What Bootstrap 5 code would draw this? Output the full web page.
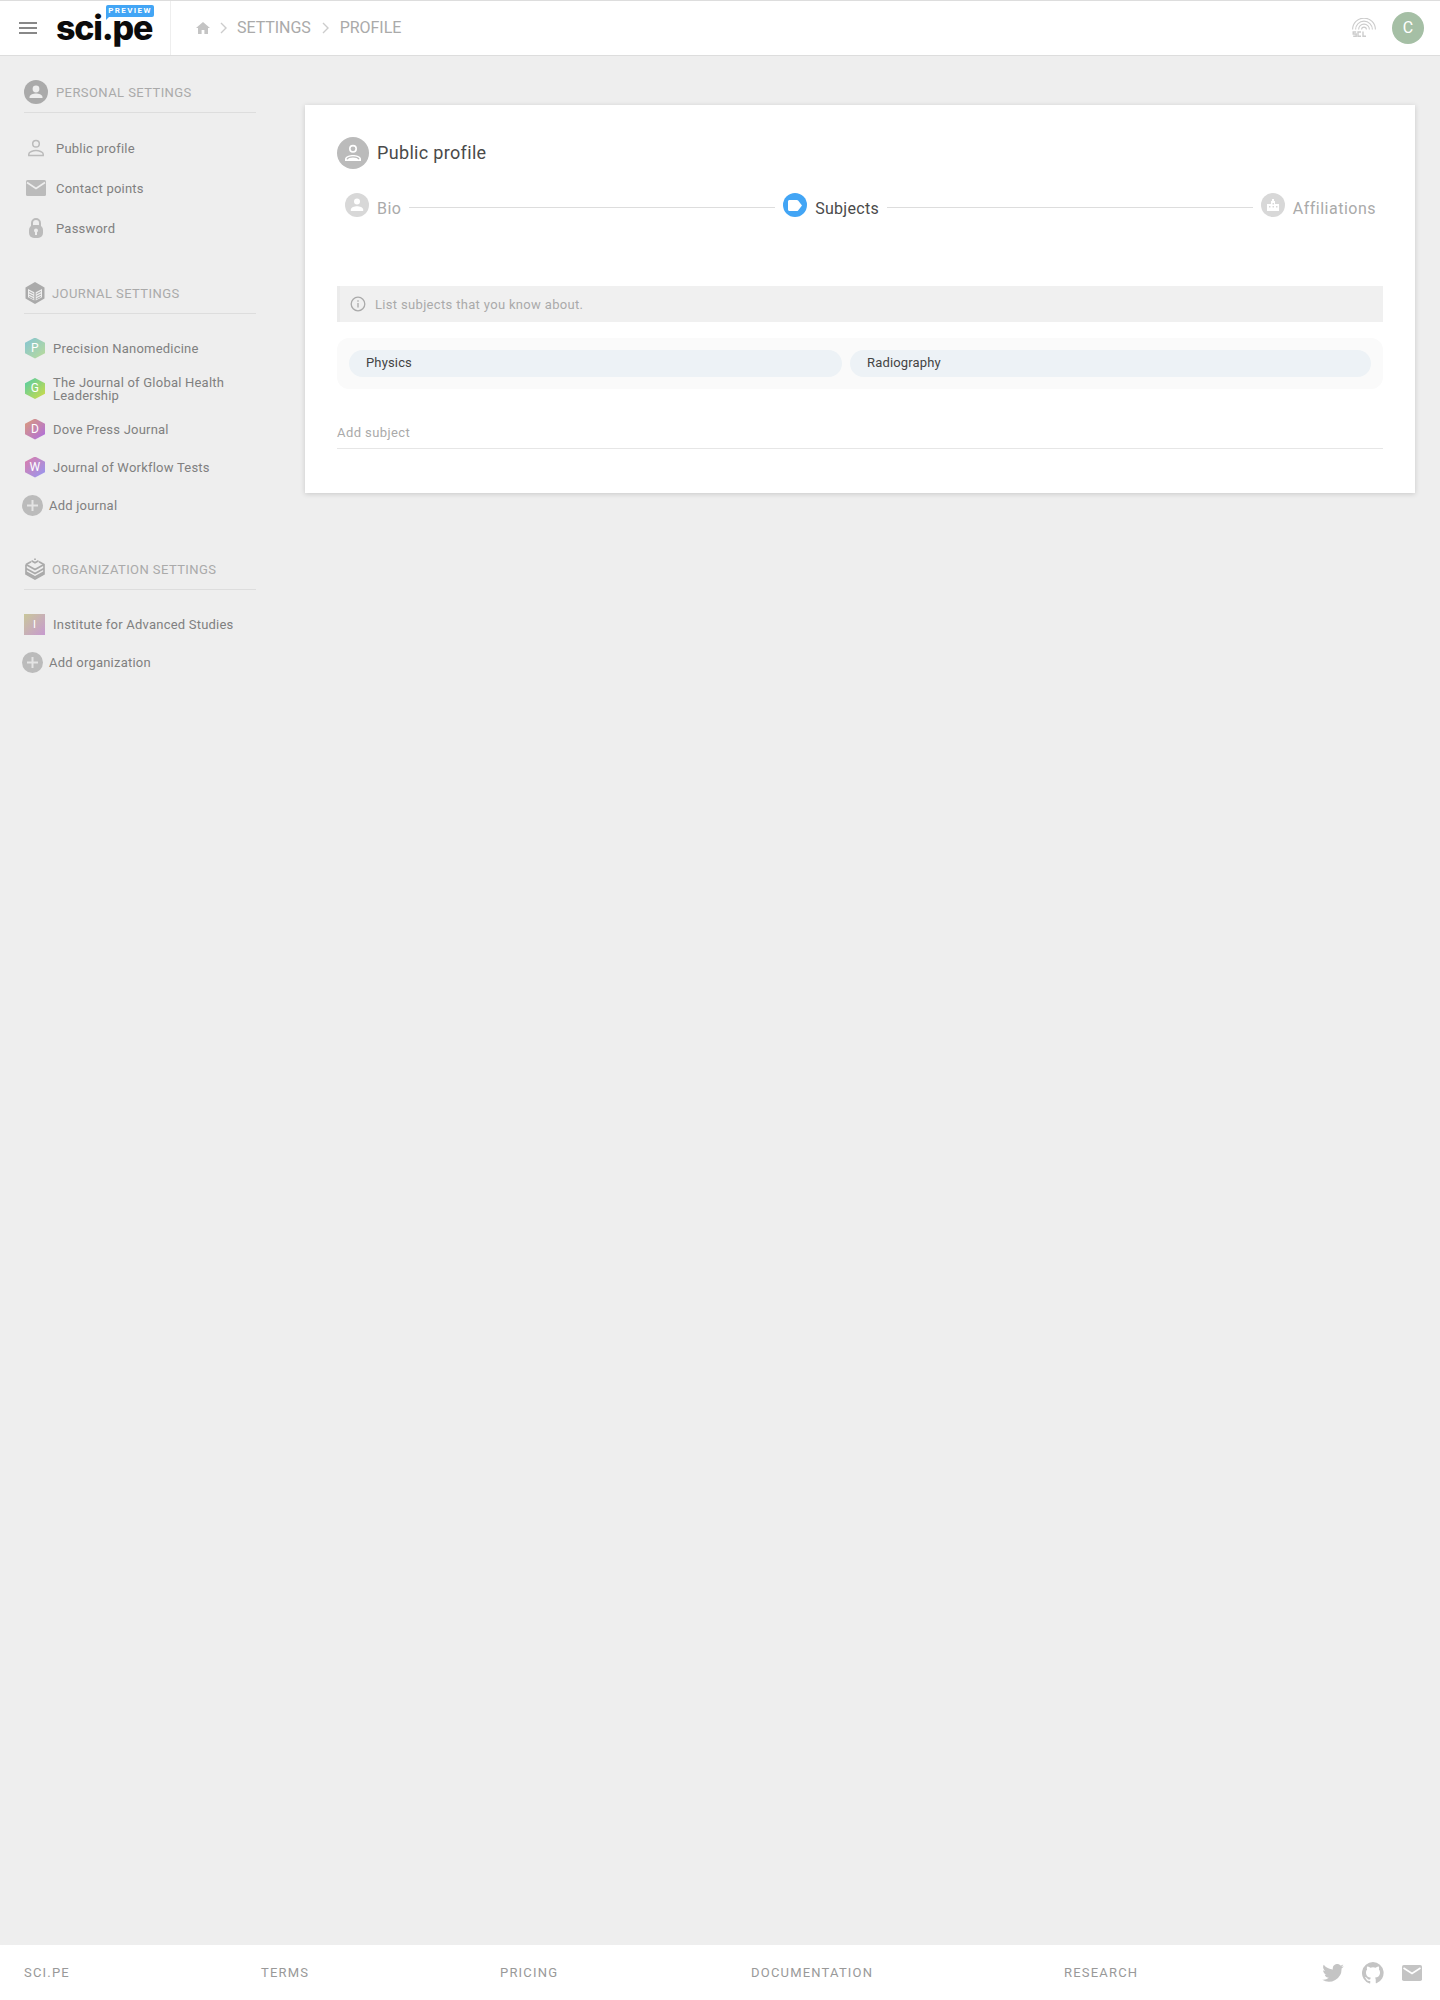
<!DOCTYPE html>
<html lang="en">
  <head>
    <meta charset="utf-8" />
    <title>sci.pe - Public profile</title>
    <link href="https://cdn.jsdelivr.net/npm/bootstrap@5.3.0/dist/css/bootstrap.min.css" rel="stylesheet">
    <script src="https://cdn.jsdelivr.net/npm/bootstrap@5.3.0/dist/js/bootstrap.bundle.min.js"></script>
    <meta name="viewport" content="width=device-width, initial-scale=1">
    <style>
      body { font-family: Roboto, "Liberation Sans", sans-serif; background: #eeeeee; color: #777; min-height: 2000px; }

      /* top bar */
      .top-bar { height: 56px; background: #fff; border-top: 1px solid #ddd; border-bottom: 1px solid #ddd; }
      .brand-box { width: 171px; padding-left: 19px; border-right: 1px solid #eee; }
      .logo-box { margin-left: 19px; width: 100px; height: 54px; }
      .logo-text { font-family: Inter, "Liberation Sans", sans-serif; font-weight: 800; font-size: 34px; letter-spacing: -1.2px; line-height: 54px; color: #0b0b0b; }
      .logo-flag { position: absolute; left: 50px; top: 4px; width: 48px; height: 12px; background: #42a5f5; border-radius: 2px 2px 2px 0; color: #fff; font-size: 8px; font-weight: 700; letter-spacing: 1.4px; line-height: 12px; text-align: center; }
      .logo-flag::after { content: ""; position: absolute; left: 0; top: 11px; border-top: 4px solid #42a5f5; border-right: 4px solid transparent; }
      .crumbs { padding-left: 25px; font-size: 16px; color: #aaa; gap: 8px; }
      .crumb-sep { margin: 0 2px; }
      .crumb-sep.wide { margin: 0 3px 0 3px; }
      .crumbs span { letter-spacing: -.05px; }
      .user-avatar { width: 32px; height: 32px; background: #a5bfa5; color: #fff; font-size: 16px; margin: 0 16px 0 16px; }

      /* sidebar */
      .side-col { width: 305px; flex: none; padding: 24px 49px 0 24px; }
      .side-head { height: 33px; padding-bottom: 8px; border-bottom: 1px solid #ddd; font-size: 13px; letter-spacing: .42px; color: #aaa; text-transform: uppercase; margin-bottom: 15px; }
      .side-head span { padding-top: 1px; }
      .side-section { margin-bottom: 33px; }
      .side-item { min-height: 38px; font-size: 13px; line-height: 13px; letter-spacing: .22px; color: #808080; text-decoration: none; }
      .side-item.tall { min-height: 40px; }
      .tall-two { min-height: 43px; }
      .ico-slot { width: 24px; flex: none; margin-right: 8px; }
      .head-ico { width: 24px; flex: none; margin-right: 8px; }
      .head-ico-sm { margin: 0 7px 0 1px; width: 20px; flex: none; }
      .hex-ico { width: 20px; height: 21px; flex: none; margin: 0 8px 0 1px; color: #fff; font-size: 12px; clip-path: polygon(50% 0, 100% 25%, 100% 75%, 50% 100%, 0 75%, 0 25%); }
      .square-ico { width: 21px; height: 21px; flex: none; margin-right: 8px; color: #fff; font-size: 11px; background: linear-gradient(135deg, #c9c79a, #c79ad0); }
      .grad-p { background: linear-gradient(135deg, #84c4d4, #bcdc98); }
      .grad-g { background: linear-gradient(135deg, #50cca8, #d4dc44); }
      .grad-d { background: linear-gradient(135deg, #dc9c78, #ac6ce4); }
      .grad-w { background: linear-gradient(135deg, #dc7ca8, #9498f4); }
      .add-ico { width: 21px; height: 21px; flex: none; margin: 0 6px 0 -2px; background: #bbb; }

      /* main card */
      .main-col { padding: 49px 25px 0 0; }
      .profile-card { border: 0; border-radius: 0; height: 388px; padding: 32px; box-shadow: 0 1px 5px rgba(0,0,0,.16); }
      .title-ico { width: 32px; height: 32px; background: #bbb; margin-right: 8px; }
      .card-heading { font-size: 18px; letter-spacing: .33px; font-weight: 400; color: #4a4a4a; margin: 0; }
      .stepper { margin-top: 24px; padding: 0 7px 0 8px; height: 24px; font-size: 16px; letter-spacing: .5px; gap: 8px; color: #aaa; }
      .step-dot { width: 24px; height: 24px; background: #d8d8d8; }
      .step-dot.on { background: #42a5f5; }
      .step-label { padding-top: 7px; }
      .step-label.on { color: #4a4a4a; letter-spacing: .3px; }
      .step-line { height: 1px; background: #ddd; margin-top: 5px; }
      .hint-box { margin-top: 69px; height: 36px; background: #f0f0f0; border-left: 3px solid #ebebeb; padding-left: 10px; font-size: 13px; letter-spacing: .33px; color: #aaa; }
      .hint-box svg { margin-right: 9px; }
      .hint-box span { padding-top: 1px; }
      .tag-box { margin-top: 16px; padding: 12px; height: 51px; background: #fafafa; border-radius: 12px; gap: 8px; }
      .tag-pill { height: 27px; padding: 0 17px; background: #edf2f6; border-radius: 14px; font-size: 13px; line-height: 26px; letter-spacing: .15px; color: #444; }
      .add-field { margin-top: 28px; height: 32px; border-bottom: 1px solid #e6e6e6; font-size: 13px; letter-spacing: .42px; color: #aaa; line-height: 32px; }

      /* footer */
      .foot-bar { height: 55px; background: #fff; padding: 0 18px 0 24px; font-size: 13px; letter-spacing: 1.2px; color: #999; margin-top: auto; }
      .foot-a { width: 237px; }
      .foot-b { width: 239px; }
      .foot-c { width: 251px; }
      .foot-d { width: 313px; }
      .foot-icons { gap: 18px; }
    </style>
  </head>
  <body class="d-flex flex-column">
    <nav class="top-bar d-flex align-items-center flex-none">
      <div class="brand-box d-flex align-items-center h-100">
        <svg width="18" height="12" viewBox="0 0 18 12" fill="#888"><path d="M0 0h18v2H0zM0 5h18v2H0zM0 10h18v2H0z"/></svg>
        <div class="logo-box position-relative">
          <span class="logo-text">sci.pe</span>
          <span class="logo-flag">PREVIEW</span>
        </div>
      </div>
      <div class="crumbs d-flex align-items-center">
        <svg width="14" height="14" viewBox="0 0 14 12" fill="#c4c4c4"><path d="M5.600 12V8h2.800v4H12V6h2L7 0 0 6h2v6z"/></svg>
        <svg class="crumb-sep" width="7" height="12" viewBox="0 0 7 12" fill="none" stroke="#ccc" stroke-width="1.400"><path d="M1 1l5 5-5 5"/></svg>
        <span>SETTINGS</span>
        <svg class="crumb-sep wide" width="7" height="12" viewBox="0 0 7 12" fill="none" stroke="#ccc" stroke-width="1.400"><path d="M1 1l5 5-5 5"/></svg>
        <span>PROFILE</span>
      </div>
      <div class="ms-auto d-flex align-items-center">
        <svg width="24" height="20" viewBox="0 0 24 20" fill="none" stroke="#ccc" stroke-width="1.100">
          <path d="M.6 11.500a11.400 11.400 0 0 1 22.800 0M3.600 11.500a8.400 8.400 0 0 1 16.800 0M6.600 11.500a5.400 5.400 0 0 1 10.800 0M9.600 11.500a2.400 2.400 0 0 1 4.800 0"/>
          <path stroke-width="1.400" d="M4.200 14h-3v2h3v2.200h-3M9 14H6v4.200h3M11 13.600v4.600h3"/>
        </svg>
        <div class="user-avatar rounded-circle d-flex align-items-center justify-content-center">C</div>
      </div>
    </nav>

    <div class="d-flex flex-grow-1">
      <aside class="side-col">
        <div class="side-section">
          <div class="side-head d-flex align-items-center">
            <svg class="head-ico" width="24" height="24" viewBox="0 0 24 24"><circle cx="12" cy="12" r="12" fill="#aaa"/><circle cx="12" cy="9" r="3.400" fill="#eee"/><path fill="#eee" d="M5.500 17.200c0-2.600 4-3.700 6.500-3.700s6.500 1.100 6.500 3.700V18h-13z"/></svg>
            <span>Personal settings</span>
          </div>
          <a class="side-item tall d-flex align-items-center" href="#">
            <span class="ico-slot d-flex justify-content-center"><svg width="18" height="18" viewBox="0 0 18 18" fill="none" stroke="#bbb" stroke-width="1.500"><circle cx="9" cy="4.800" r="3.300"/><path d="M1.800 16.500v-1.500c0-2.300 4.500-3.400 7.200-3.400s7.200 1.100 7.200 3.400v1.500z"/></svg></span>
            <span>Public profile</span>
          </a>
          <a class="side-item tall d-flex align-items-center" href="#">
            <span class="ico-slot d-flex justify-content-center"><svg width="20" height="16" viewBox="0 0 20 16"><rect width="20" height="16" rx="1.500" fill="#bbb"/><path d="M1 2.500l9 6 9-6" fill="none" stroke="#eee" stroke-width="1.600"/></svg></span>
            <span>Contact points</span>
          </a>
          <a class="side-item tall d-flex align-items-center" href="#">
            <span class="ico-slot d-flex justify-content-center"><svg width="14" height="20" viewBox="0 0 14 20"><path d="M3 8V5a4 4 0 0 1 8 0v3" fill="none" stroke="#bbb" stroke-width="2"/><rect y="7" width="14" height="13" rx="5" fill="#bbb"/><circle cx="7" cy="12.500" r="2" fill="#eee"/><rect x="6" y="13" width="2" height="4" fill="#eee"/></svg></span>
            <span>Password</span>
          </a>
        </div>

        <div class="side-section">
          <div class="side-head d-flex align-items-center">
            <svg class="head-ico-sm" width="20" height="22" viewBox="0 0 20 22"><path fill="#aaa" d="M10 0l9.500 5.500v11L10 22 .5 16.500v-11z"/><path fill="#eee" d="M3 7l6.300 3.200v8.300L3 15.300zM17 7l-6.300 3.200v8.300l6.300-3.200z"/><path stroke="#aaa" stroke-width="1" fill="none" d="M4 9.500l4.500 2.300M4 12l4.500 2.300M4 14.500l4.500 2.300M16 9.500l-4.500 2.300M16 12l-4.500 2.300M16 14.500l-4.500 2.300"/></svg>
            <span>Journal settings</span>
          </div>
          <a class="side-item d-flex align-items-center" href="#">
            <span class="hex-ico grad-p d-flex align-items-center justify-content-center">P</span>
            <span>Precision Nanomedicine</span>
          </a>
          <a class="side-item tall-two d-flex align-items-center" href="#">
            <span class="hex-ico grad-g d-flex align-items-center justify-content-center">G</span>
            <span>The Journal of Global Health Leadership</span>
          </a>
          <a class="side-item d-flex align-items-center" href="#">
            <span class="hex-ico grad-d d-flex align-items-center justify-content-center">D</span>
            <span>Dove Press Journal</span>
          </a>
          <a class="side-item d-flex align-items-center" href="#">
            <span class="hex-ico grad-w d-flex align-items-center justify-content-center">W</span>
            <span>Journal of Workflow Tests</span>
          </a>
          <a class="side-item d-flex align-items-center" href="#">
            <span class="add-ico rounded-circle d-flex align-items-center justify-content-center"><svg width="11" height="11" viewBox="0 0 11 11" fill="#e4e4e4"><path d="M4.500 0h2v4.500H11v2H6.500V11h-2V6.500H0v-2h4.500z"/></svg></span>
            <span>Add journal</span>
          </a>
        </div>

        <div class="side-section">
          <div class="side-head d-flex align-items-center">
            <svg class="head-ico-sm" width="20" height="22" viewBox="0 0 20 22" fill="none" stroke="#aaa" stroke-width="1.700"><path d="M10 .5v1.500M6.500 2.800L10 4.800l3.500-2"/><path d="M1 6.500l9 5 9-5M1 10.500l9 5 9-5M1 14l9 5 9-5M1 6.500V16l9 5 9-5V6.500L14 3.800M1 6.500l5-2.700"/></svg>
            <span>Organization settings</span>
          </div>
          <a class="side-item d-flex align-items-center" href="#">
            <span class="square-ico d-flex align-items-center justify-content-center">I</span>
            <span>Institute for Advanced Studies</span>
          </a>
          <a class="side-item d-flex align-items-center" href="#">
            <span class="add-ico rounded-circle d-flex align-items-center justify-content-center"><svg width="11" height="11" viewBox="0 0 11 11" fill="#e4e4e4"><path d="M4.500 0h2v4.500H11v2H6.500V11h-2V6.500H0v-2h4.500z"/></svg></span>
            <span>Add organization</span>
          </a>
        </div>
      </aside>

      <main class="main-col flex-grow-1">
        <div class="card profile-card">
          <div class="d-flex align-items-center">
            <span class="title-ico rounded-circle d-flex align-items-center justify-content-center"><svg width="18" height="18" viewBox="0 0 18 18" fill="none" stroke="#fff" stroke-width="1.600"><circle cx="9" cy="4.800" r="3.200"/><path fill="#fff" stroke="none" d="M1 17v-2c0-2.800 5-4 8-4s8 1.200 8 4v2z"/><path stroke="#bbb" stroke-width="1.300" d="M3 15.300c.6-1.300 3.600-2.400 6-2.400s5.400 1.100 6 2.400"/></svg></span>
            <h2 class="card-heading">Public profile</h2>
          </div>

          <div class="stepper d-flex align-items-center">
            <span class="step-dot rounded-circle d-flex align-items-center justify-content-center"><svg width="14" height="14" viewBox="0 0 14 14" fill="#fff"><circle cx="7" cy="3.500" r="3"/><path d="M.8 13v-1.400c0-2.300 3.800-3.400 6.200-3.400s6.200 1.100 6.200 3.400V13z"/></svg></span>
            <span class="step-label">Bio</span>
            <span class="step-line flex-grow-1"></span>
            <span class="step-dot on rounded-circle d-flex align-items-center justify-content-center"><svg width="14" height="11" viewBox="0 0 14 11" fill="#fff"><path d="M1.500 0h7.300c.5 0 1 .2 1.300.6L14 5.500l-3.900 4.900c-.3.400-.8.600-1.300.6H1.500C.7 11 0 10.300 0 9.500v-8C0 .7.700 0 1.500 0z"/></svg></span>
            <span class="step-label on">Subjects</span>
            <span class="step-line flex-grow-1"></span>
            <span class="step-dot rounded-circle d-flex align-items-center justify-content-center"><svg width="12" height="12" viewBox="0 0 12 12" fill="#fff"><path fill-rule="evenodd" d="M4 2h1V0h2v2h1v3h4v7H0V5h4zM5.500 4v1.500H7V4zM5.500 7v1.500H7V7zM2 7v1.500h1.500V7zM9 7v1.500h1.500V7z"/></svg></span>
            <span class="step-label">Affiliations</span>
          </div>

          <div class="hint-box d-flex align-items-center">
            <svg width="16" height="16" viewBox="0 0 16 16" fill="none" stroke="#aaa" stroke-width="1.300"><circle cx="8" cy="8" r="6.800"/><path d="M8 7v4.500M8 4.200v1.500"/></svg>
            <span>List subjects that you know about.</span>
          </div>

          <div class="tag-box d-flex">
            <span class="tag-pill flex-fill">Physics</span>
            <span class="tag-pill flex-fill">Radiography</span>
          </div>

          <div class="add-field">Add subject</div>
        </div>
      </main>
    </div>

    <footer class="foot-bar d-flex align-items-center">
      <span class="foot-a">SCI.PE</span>
      <span class="foot-b">TERMS</span>
      <span class="foot-c">PRICING</span>
      <span class="foot-d">DOCUMENTATION</span>
      <span>RESEARCH</span>
      <div class="foot-icons d-flex align-items-center ms-auto">
        <svg width="22" height="18" viewBox="0 0 24 20" fill="#c4c4c4"><path d="M24 2.400c-.9.400-1.800.7-2.800.8 1-.6 1.800-1.600 2.200-2.700-1 .6-2 1-3.100 1.200A4.900 4.900 0 0 0 11.900 6.200C7.800 6 4.200 4 1.700.9c-1.300 2.200-.7 5.100 1.500 6.600-.8 0-1.600-.2-2.200-.6 0 2.300 1.600 4.500 4 5-.7.200-1.500.2-2.200.1.600 2 2.400 3.400 4.600 3.400A9.900 9.900 0 0 1 0 17.400 14 14 0 0 0 21.500 5c1-.7 1.900-1.600 2.500-2.600z"/></svg>
        <svg width="22" height="22" viewBox="0 0 16 16" fill="#c4c4c4"><path d="M8 0a8 8 0 0 0-2.500 15.600c.4.100.5-.2.500-.4v-1.400c-2.200.5-2.700-1-2.700-1-.4-.9-.9-1.200-.9-1.200-.7-.5.100-.5.100-.5.800.100 1.200.8 1.200.8.700 1.200 1.900.9 2.300.7.100-.5.300-.9.500-1.100-1.800-.2-3.600-.9-3.600-4 0-.9.300-1.600.8-2.100-.1-.2-.4-1 .1-2.100 0 0 .7-.2 2.200.8a7.500 7.500 0 0 1 4 0c1.500-1 2.200-.8 2.200-.8.400 1.100.2 1.900.1 2.100.5.600.8 1.300.8 2.100 0 3.100-1.900 3.700-3.700 3.900.3.300.6.800.6 1.500v2.200c0 .2.100.5.500.4A8 8 0 0 0 8 0z"/></svg>
        <svg width="20" height="16" viewBox="0 0 20 16"><rect width="20" height="16" rx="1.800" fill="#c4c4c4"/><path d="M1.500 3l8.500 5.500L18.500 3" fill="none" stroke="#fff" stroke-width="1.600"/></svg>
      </div>
    </footer>
  </body>
</html>
